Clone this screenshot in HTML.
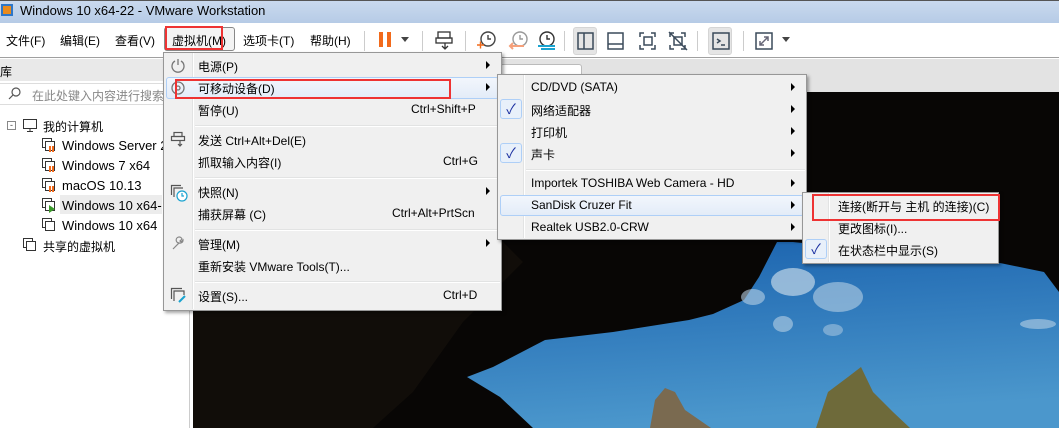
<!DOCTYPE html>
<html><head><meta charset="utf-8"><style>
*{margin:0;padding:0;box-sizing:border-box}
body{width:1059px;height:428px;overflow:hidden;position:relative;background:#fff;font-family:"Liberation Sans","Noto Sans CJK SC",sans-serif;font-size:12px;color:#000}
.a{position:absolute;white-space:nowrap}
.menu{position:absolute;background:#f0f0f0;border:1px solid #979797;box-shadow:2px 2px 3px rgba(0,0,0,.35)}
.vs{position:absolute;top:2px;bottom:2px;width:2px;border-left:1px solid #e2e3e3;border-right:1px solid #fff}
.hs{position:absolute;height:2px;border-top:1px solid #e2e3e3;border-bottom:1px solid #fff}
.arr{position:absolute;width:0;height:0;border-top:4px solid transparent;border-bottom:4px solid transparent;border-left:4px solid #000}
.chk{position:absolute;width:22px;height:20px;border:1px solid #aecff7;border-radius:3px;background:#e8f0fa;color:#1a2fa0;font-size:14px;text-align:center;line-height:18px}
.red{position:absolute;border:2px solid #ee3333}
.hl{position:absolute;border:1px solid #aecff7;border-radius:3px;background:linear-gradient(#f2f6fc,#e3ecf8)}
</style></head><body>
<div class="a" style="left:0;top:0;width:1059px;height:23px;background:linear-gradient(#c9d9ee,#b6cbe6);border-top:1px solid #555"></div>
<div class="a" style="left:1px;top:4px;width:12px;height:12px;background:#e98a1c;border:2px solid #2d76c8"></div>
<div class="a" style="left:20px;top:3px;font-size:13px;">Windows 10 x64-22 - VMware Workstation</div>
<div class="a" style="left:0;top:23px;width:1059px;height:35px;background:#fff;border-bottom:1px solid #a0a0a0"></div>
<div class="a" style="left:6px;top:32px">文件(F)</div>
<div class="a" style="left:60px;top:32px">编辑(E)</div>
<div class="a" style="left:115px;top:32px">查看(V)</div>
<div class="a" style="left:164px;top:27px;width:71px;height:24px;border:1px solid #888;border-radius:3px;background:#f4f4f4"></div>
<div class="a" style="left:172px;top:32px">虚拟机(M)</div>
<div class="red" style="left:165px;top:26px;width:58px;height:24px"></div>
<div class="a" style="left:243px;top:32px">选项卡(T)</div>
<div class="a" style="left:310px;top:32px">帮助(H)</div>
<div class="a" style="left:364px;top:31px;width:1px;height:20px;background:#ccc"></div>
<div class="a" style="left:379px;top:32px;width:4px;height:15px;background:#f26a1b"></div>
<div class="a" style="left:387px;top:32px;width:4px;height:15px;background:#f26a1b"></div>
<div class="arr" style="left:401px;top:37px;border:4px solid transparent;border-top:5px solid #444"></div>
<div class="a" style="left:422px;top:31px;width:1px;height:20px;background:#ccc"></div>
<svg class="a" style="left:434px;top:30px" width="22" height="22" fill="none" stroke="#333" stroke-width="1.3"><rect x="4" y="2" width="12" height="6"/><rect x="2" y="8" width="16" height="5"/><path d="M11 13v6M8 16l3 3 3-3"/></svg>
<div class="a" style="left:465px;top:31px;width:1px;height:20px;background:#ccc"></div>
<svg class="a" style="left:474px;top:29px" width="24" height="24" fill="none" stroke-width="1.4"><circle cx="14" cy="10" r="7" stroke="#444"/><path d="M14 6v4h3" stroke="#444"/><path d="M3 16h7M6.5 12.5v7" stroke="#f26a1b"/></svg>
<svg class="a" style="left:506px;top:29px" width="24" height="24" fill="none" stroke-width="1.4"><circle cx="14" cy="10" r="7" stroke="#999"/><path d="M14 6v4h3" stroke="#999"/><path d="M4 17h14M7 14l-3 3 3 3" stroke="#f5a07a" stroke-width="2"/></svg>
<svg class="a" style="left:535px;top:29px" width="24" height="24" fill="none" stroke-width="1.4"><circle cx="12" cy="10" r="7" stroke="#333"/><path d="M12 6v4h3" stroke="#333"/><path d="M3 17h17M6 20h14" stroke="#1aa3d0" stroke-width="2"/></svg>
<div class="a" style="left:564px;top:31px;width:1px;height:20px;background:#ccc"></div>
<div class="a" style="left:573px;top:27px;width:24px;height:28px;background:#e5e5e5;border:1px solid #d5d5d5;border-radius:3px"></div>
<svg class="a" style="left:575px;top:30px" width="22" height="22" fill="none" stroke="#3a4a5a" stroke-width="1.5"><rect x="3" y="3" width="15" height="16"/><path d="M9 3v16"/></svg>
<svg class="a" style="left:605px;top:30px" width="22" height="22" fill="none" stroke="#3a4a5a" stroke-width="1.5"><rect x="3" y="3" width="15" height="16"/><path d="M3 14h15"/></svg>
<svg class="a" style="left:637px;top:30px" width="22" height="22" fill="none" stroke="#3a4a5a" stroke-width="1.5"><path d="M3 7V3h4M14 3h4v4M18 15v4h-4M7 19H3v-4"/><rect x="7" y="7" width="8" height="8"/></svg>
<svg class="a" style="left:667px;top:30px" width="22" height="22" fill="none" stroke="#3a4a5a" stroke-width="1.5"><path d="M3 7V3h4M14 3h4v4M18 15v4h-4M7 19H3v-4M2 2l18 18"/><rect x="7" y="7" width="8" height="8"/></svg>
<div class="a" style="left:697px;top:31px;width:1px;height:20px;background:#ccc"></div>
<div class="a" style="left:708px;top:27px;width:24px;height:28px;background:#e5e5e5;border:1px solid #d5d5d5;border-radius:3px"></div>
<svg class="a" style="left:710px;top:30px" width="22" height="22" fill="none" stroke="#3a4a5a" stroke-width="1.5"><rect x="3" y="3" width="16" height="16"/><path d="M7 9l3 2-3 2M11 15h4"/></svg>
<div class="a" style="left:743px;top:31px;width:1px;height:20px;background:#ccc"></div>
<svg class="a" style="left:753px;top:30px" width="22" height="22" fill="none" stroke="#3a4a5a" stroke-width="1.5"><rect x="3" y="3" width="16" height="16"/><path d="M7 15l8-8M11 7h4v4M7 11v4h4" stroke="#667"/></svg>
<div class="arr" style="left:782px;top:37px;border:4px solid transparent;border-top:5px solid #444"></div>
<div class="a" style="left:0;top:59px;width:190px;height:369px;background:#fff;border-right:1px solid #ccc"></div>
<div class="a" style="left:0;top:59px;width:190px;height:22px;background:#e9e9e9"></div>
<div class="a" style="left:0;top:63px">库</div>
<div class="a" style="left:0;top:83px;width:190px;height:22px;border-top:1px solid #ddd;border-bottom:1px solid #ddd"></div>
<svg class="a" style="left:8px;top:86px" width="14" height="14" fill="none" stroke="#555" stroke-width="1.2"><circle cx="8" cy="6" r="4"/><path d="M5 9l-4 4"/></svg>
<div class="a" style="left:32px;top:87px;color:#888">在此处键入内容进行搜索</div>
<div class="a" style="left:7px;top:121px;width:9px;height:9px;border:1px solid #888;font-size:9px;line-height:6px;text-align:center;color:#444">-</div>
<svg class="a" style="left:22px;top:117px" width="16" height="16" fill="none" stroke="#333"><rect x="1.5" y="2.5" width="13" height="9"/><path d="M8 12v2M5 14.5h6"/></svg>
<div class="a" style="left:43px;top:118px">我的计算机</div>
<svg class="a" style="left:41px;top:137px" width="16" height="16" fill="none" stroke="#333"><rect x="1.5" y="1.5" width="9" height="9"/><rect x="4.5" y="4.5" width="9" height="9" fill="#fff"/><path d="M9 9v6M12 9v6" stroke="#f26a1b" stroke-width="2"/></svg>
<div class="a" style="left:62px;top:138px;font-size:13px">Windows Server 2</div>
<svg class="a" style="left:41px;top:157px" width="16" height="16" fill="none" stroke="#333"><rect x="1.5" y="1.5" width="9" height="9"/><rect x="4.5" y="4.5" width="9" height="9" fill="#fff"/><path d="M9 9v6M12 9v6" stroke="#f26a1b" stroke-width="2"/></svg>
<div class="a" style="left:62px;top:158px;font-size:13px">Windows 7 x64</div>
<svg class="a" style="left:41px;top:177px" width="16" height="16" fill="none" stroke="#333"><rect x="1.5" y="1.5" width="9" height="9"/><rect x="4.5" y="4.5" width="9" height="9" fill="#fff"/><path d="M9 9v6M12 9v6" stroke="#f26a1b" stroke-width="2"/></svg>
<div class="a" style="left:62px;top:178px;font-size:13px">macOS 10.13</div>
<div class="a" style="left:60px;top:195px;width:102px;height:19px;background:#ececec"></div>
<svg class="a" style="left:41px;top:197px" width="16" height="16" fill="none" stroke="#333"><rect x="1.5" y="1.5" width="9" height="9"/><rect x="4.5" y="4.5" width="9" height="9" fill="#fff"/><path d="M8 8l6 4-6 4z" fill="#3a9a2a" stroke="none"/></svg>
<div class="a" style="left:62px;top:198px;font-size:13px">Windows 10 x64-</div>
<svg class="a" style="left:41px;top:217px" width="16" height="16" fill="none" stroke="#333"><rect x="1.5" y="1.5" width="9" height="9"/><rect x="4.5" y="4.5" width="9" height="9" fill="#fff"/></svg>
<div class="a" style="left:62px;top:218px;font-size:13px">Windows 10 x64</div>
<svg class="a" style="left:22px;top:237px" width="16" height="16" fill="none" stroke="#333"><rect x="1.5" y="1.5" width="9" height="9"/><rect x="4.5" y="4.5" width="9" height="9" fill="#fff"/></svg>
<div class="a" style="left:43px;top:238px">共享的虚拟机</div>
<div class="a" style="left:191px;top:59px;width:868px;height:33px;background:#e3e3e3"></div>
<div class="a" style="left:500px;top:64px;width:82px;height:28px;background:#fff;border:1px solid #bbb;border-radius:3px 3px 0 0"></div>
<svg class="a" style="left:193px;top:92px" width="866" height="336">
<rect width="866" height="336" fill="#080605"/>
<defs><linearGradient id="sky" x1="0" y1="0" x2="0.2" y2="1"><stop offset="0" stop-color="#1a62ae"/><stop offset="1" stop-color="#4b97cc"/></linearGradient></defs>
<path d="M584 150 L566 185 L551 208 L520 222 L496 228 L420 240 L352 248 L300 275 L274 285 L307 305 L340 336 L866 336 L866 200 L851 180 L807 171 L600 150 Z" fill="url(#sky)"/>
<ellipse cx="600" cy="190" rx="22" ry="14" fill="#b8d0e4" opacity=".75"/>
<ellipse cx="645" cy="205" rx="25" ry="15" fill="#b8d0e4" opacity=".6"/>
<ellipse cx="560" cy="205" rx="12" ry="8" fill="#b8d0e4" opacity=".6"/>
<ellipse cx="590" cy="232" rx="10" ry="8" fill="#b8d0e4" opacity=".6"/>
<ellipse cx="640" cy="238" rx="10" ry="6" fill="#b8d0e4" opacity=".5"/>
<ellipse cx="845" cy="232" rx="18" ry="5" fill="#b8d0e4" opacity=".6"/>
<path d="M457 336 L462 308 L472 296 L482 300 L492 318 L518 336Z" fill="#7a6a50"/>
<path d="M623 336 L635 300 L655 285 L668 275 L680 300 L700 320 L717 336Z" fill="#6e6a3a"/>
<path d="M0 0 L300 140 L330 170 L270 230 L220 300 L180 336 L0 336Z" fill="#1a140e" opacity=".5"/>
</svg>
<div class="menu" style="left:163px;top:52px;width:339px;height:259px"></div>
<div class="vs" style="left:192px;top:53px;height:256px"></div>
<div class="hl" style="left:166px;top:77px;width:333px;height:22px"></div>
<svg class="a" style="left:170px;top:57px" width="16" height="16" fill="none" stroke="#777" stroke-width="1.3"><path d="M5 4a6 6 0 1 0 6 0M8 2v6"/></svg>
<svg class="a" style="left:170px;top:80px" width="16" height="16" fill="none" stroke="#777" stroke-width="1.3"><circle cx="8" cy="8" r="6"/><circle cx="8" cy="8" r="2"/></svg>
<div class="a" style="left:198px;top:58px">电源(P)</div><div class="arr" style="left:486px;top:61px"></div>
<div class="a" style="left:198px;top:80px">可移动设备(D)</div><div class="arr" style="left:486px;top:83px"></div>
<div class="a" style="left:198px;top:102px">暂停(U)</div><div class="a" style="left:411px;top:102px">Ctrl+Shift+P</div>
<div class="hs" style="left:195px;top:125px;width:305px"></div>
<svg class="a" style="left:170px;top:131px" width="16" height="16" fill="none" stroke="#555" stroke-width="1.2"><rect x="4" y="1.5" width="8" height="4"/><rect x="1.5" y="5.5" width="13" height="4"/><path d="M10 10v5M8 13l2 2 2-2"/></svg>
<div class="a" style="left:198px;top:132px">发送 Ctrl+Alt+Del(E)</div>
<div class="a" style="left:198px;top:154px">抓取输入内容(I)</div><div class="a" style="left:443px;top:154px">Ctrl+G</div>
<div class="hs" style="left:195px;top:177px;width:305px"></div>
<svg class="a" style="left:170px;top:184px" width="18" height="18" fill="none" stroke="#555" stroke-width="1.2"><path d="M1.5 11V1.5H11M4 13V4h9"/><circle cx="12" cy="12" r="5" stroke="#1aa3d0" fill="#fff"/><path d="M12 9v3h2" stroke="#1aa3d0"/></svg>
<div class="a" style="left:198px;top:184px">快照(N)</div><div class="arr" style="left:486px;top:187px"></div>
<div class="a" style="left:198px;top:206px">捕获屏幕 (C)</div><div class="a" style="left:392px;top:206px">Ctrl+Alt+PrtScn</div>
<div class="hs" style="left:195px;top:229px;width:305px"></div>
<svg class="a" style="left:170px;top:235px" width="16" height="16" fill="none" stroke="#888" stroke-width="1.2"><path d="M3 14l6-6a3 3 0 1 1 3-4l-2 2 1 1 2-2a3 3 0 0 1-4 3l-6 6z"/></svg>
<div class="a" style="left:198px;top:236px">管理(M)</div><div class="arr" style="left:486px;top:239px"></div>
<div class="a" style="left:198px;top:258px">重新安装 VMware Tools(T)...</div>
<div class="hs" style="left:195px;top:281px;width:305px"></div>
<svg class="a" style="left:170px;top:287px" width="18" height="18" fill="none" stroke="#555" stroke-width="1.2"><path d="M1.5 12V1.5H12M4 14V4h10v4"/><path d="M9 15l6-6" stroke="#1aa3d0" stroke-width="2"/></svg>
<div class="a" style="left:198px;top:288px">设置(S)...</div><div class="a" style="left:443px;top:288px">Ctrl+D</div>
<div class="red" style="left:175px;top:79px;width:276px;height:20px"></div>
<div class="menu" style="left:497px;top:74px;width:310px;height:166px"></div>
<div class="vs" style="left:523px;top:75px;height:163px"></div>
<div class="a" style="left:531px;top:80px">CD/DVD (SATA)</div><div class="arr" style="left:791px;top:83px"></div>
<div class="chk" style="left:500px;top:99px">✓</div>
<div class="a" style="left:531px;top:102px">网络适配器</div><div class="arr" style="left:791px;top:105px"></div>
<div class="a" style="left:531px;top:124px">打印机</div><div class="arr" style="left:791px;top:127px"></div>
<div class="chk" style="left:500px;top:143px">✓</div>
<div class="a" style="left:531px;top:146px">声卡</div><div class="arr" style="left:791px;top:149px"></div>
<div class="hs" style="left:526px;top:169px;width:279px"></div>
<div class="a" style="left:531px;top:176px">Importek TOSHIBA Web Camera - HD</div><div class="arr" style="left:791px;top:179px"></div>
<div class="hl" style="left:500px;top:195px;width:304px;height:21px"></div>
<div class="a" style="left:531px;top:198px">SanDisk Cruzer Fit</div><div class="arr" style="left:791px;top:201px"></div>
<div class="a" style="left:531px;top:220px">Realtek USB2.0-CRW</div><div class="arr" style="left:791px;top:223px"></div>
<div class="menu" style="left:802px;top:192px;width:197px;height:72px"></div>
<div class="vs" style="left:828px;top:193px;height:69px"></div>
<div class="a" style="left:838px;top:198px">连接(断开与 主机 的连接)(C)</div>
<div class="a" style="left:838px;top:220px">更改图标(I)...</div>
<div class="chk" style="left:805px;top:239px">✓</div>
<div class="a" style="left:838px;top:242px">在状态栏中显示(S)</div>
<div class="red" style="left:812px;top:194px;width:188px;height:27px"></div>
</body></html>
